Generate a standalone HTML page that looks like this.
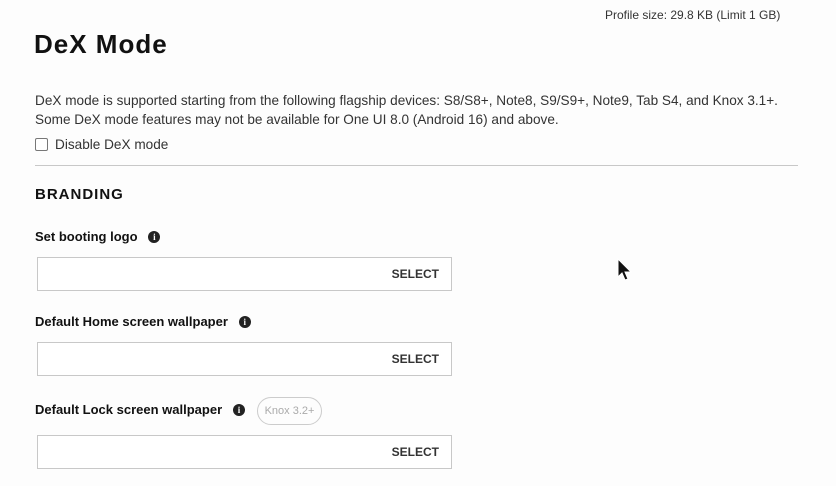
<!DOCTYPE html>
<html><head><meta charset="utf-8"><style>
*{margin:0;padding:0;box-sizing:border-box}
body{width:836px;height:486px;background:#fdfdfd;font-family:"Liberation Sans",sans-serif;color:#222;position:relative;overflow:hidden}
.a{position:absolute}
.info{display:inline-block;width:12px;height:12px;border-radius:50%;background:#222;color:#fff;font:bold 9px/12px "Liberation Serif",serif;text-align:center;vertical-align:1px}
.lbl{font-size:13px;font-weight:bold;color:#111}
.box{position:absolute;left:37px;width:415px;height:34px;border:1px solid #c8c8c8;background:#fff}
.box span{position:absolute;right:12px;top:9px;font-size:12px;font-weight:bold;color:#333}
</style></head><body>
<div class="a" style="left:605px;top:8px;font-size:12px;color:#333">Profile size: 29.8 KB (Limit 1 GB)</div>
<div class="a" style="left:34px;top:29px;font-size:26px;font-weight:bold;color:#111;letter-spacing:1px">DeX Mode</div>
<div class="a" style="left:35px;top:91px;font-size:13.6px;line-height:19px;color:#333;white-space:nowrap">DeX mode is supported starting from the following flagship devices: S8/S8+, Note8, S9/S9+, Note9, Tab S4, and Knox 3.1+.<br>Some DeX mode features may not be available for One UI 8.0 (Android 16) and above.</div>
<div class="a" style="left:35px;top:138px;width:13px;height:13px;border:1px solid #777;border-radius:2px;background:#fff"></div>
<div class="a" style="left:55px;top:137px;font-size:13.6px;color:#333">Disable DeX mode</div>
<div class="a" style="left:35px;top:165px;width:763px;height:1px;background:#c8c8c8"></div>
<div class="a" style="left:35px;top:186px;font-size:15px;font-weight:bold;letter-spacing:1px;color:#111">BRANDING</div>
<div class="a lbl" style="left:35px;top:229px">Set booting logo &nbsp;&nbsp;<span class="info">i</span></div>
<div class="box" style="top:257px"><span>SELECT</span></div>
<div class="a lbl" style="left:35px;top:314px">Default Home screen wallpaper &nbsp;&nbsp;<span class="info">i</span></div>
<div class="box" style="top:342px"><span>SELECT</span></div>
<div class="a lbl" style="left:35px;top:402px">Default Lock screen wallpaper &nbsp;&nbsp;<span class="info">i</span></div>
<div class="a" style="left:257px;top:397px;width:65px;height:28px;border:1px solid #ccc;border-radius:14px;font-size:11px;color:#aaa;text-align:center;line-height:26px">Knox 3.2+</div>
<div class="box" style="top:435px"><span>SELECT</span></div>
<svg class="a" style="left:617px;top:258px" width="18" height="26" viewBox="0 0 18 26"><path d="M1 1 L1 19 L5 15 L8 22 L11 21 L8 14 L14 14 Z" fill="#111" stroke="#fff" stroke-width="1"/></svg>
</body></html>
